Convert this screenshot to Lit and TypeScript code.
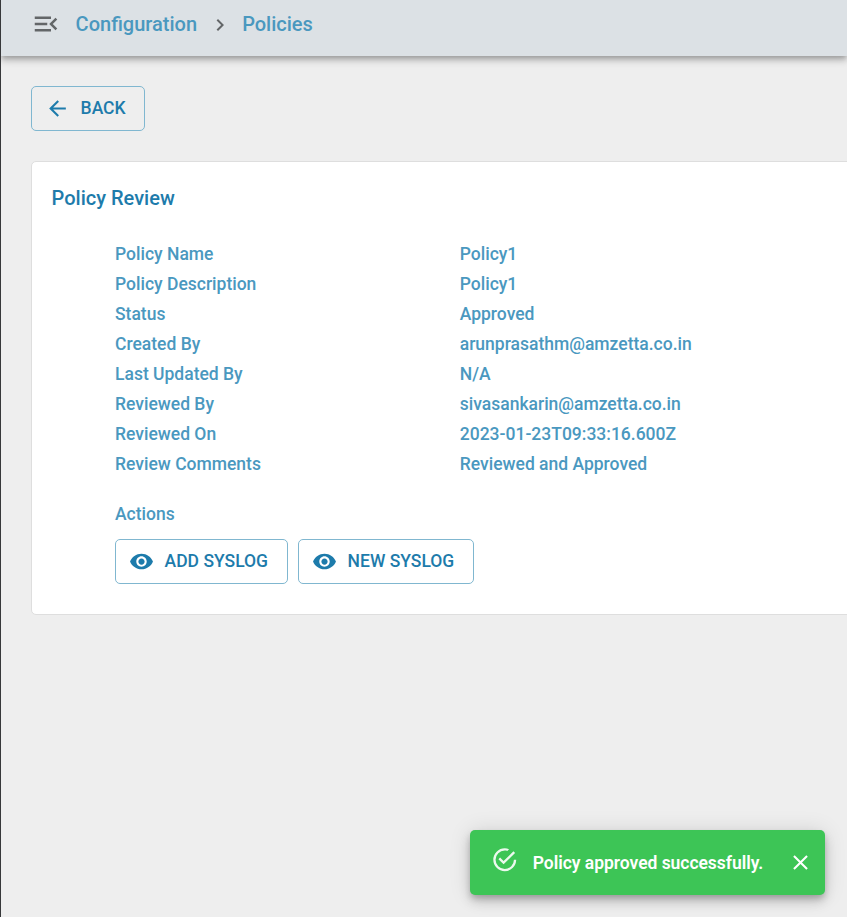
import { LitElement, html, css, svg } from "lit";
import { customElement } from "lit/decorators.js";

const ICONS = {
  menuOpen: "M3 18h13v-2H3v2zM3 6v2h13V6H3zm0 7h10v-2H3v2zm18 2.59L17.42 12 21 8.41 19.59 7l-5 5 5 5L21 15.59z",
  next: "M10 6L8.59 7.41 13.17 12l-4.58 4.59L10 18l6-6z",
  back: "M20 11H7.83l5.59-5.59L12 4l-8 8 8 8 1.41-1.41L7.83 13H20v-2z",
  eye: "M12 4.5C7 4.5 2.73 7.61 1 12c1.73 4.39 6 7.5 11 7.5s9.27-3.11 11-7.5c-1.73-4.39-6-7.5-11-7.5zM12 17c-2.76 0-5-2.24-5-5s2.24-5 5-5 5 2.24 5 5-2.24 5-5 5zm0-8c-1.66 0-3 1.34-3 3s1.34 3 3 3 3-1.34 3-3-1.34-3-3-3z",
  success: "M20,12A8,8 0 0,1 12,20A8,8 0 0,1 4,12A8,8 0 0,1 12,4C12.76,4 13.5,4.11 14.2,4.31L15.77,2.74C14.61,2.26 13.34,2 12,2A10,10 0 0,0 2,12A10,10 0 0,0 12,22A10,10 0 0,0 22,12M7.91,10.08L6.5,11.5L11,16L21,6L19.59,4.58L11,13.17L7.91,10.08Z",
  close: "M19 6.41L17.59 5 12 10.59 6.41 5 5 6.41 10.59 12 5 17.59 6.41 19 12 13.41 17.59 19 19 17.59 13.41 12z",
};

const icon = (name: keyof typeof ICONS) =>
  html`<svg class="icon ${name}" viewBox="0 0 24 24" aria-hidden="true">${svg`<path d=${ICONS[name]}></path>`}</svg>`;

const DETAILS: [string, string][] = [
  ["Policy Name", "Policy1"],
  ["Policy Description", "Policy1"],
  ["Status", "Approved"],
  ["Created By", "arunprasathm@amzetta.co.in"],
  ["Last Updated By", "N/A"],
  ["Reviewed By", "sivasankarin@amzetta.co.in"],
  ["Reviewed On", "2023-01-23T09:33:16.600Z"],
  ["Review Comments", "Reviewed and Approved"],
];

@customElement("app-root")
export class AppRoot extends LitElement {
  static styles = css`
    :host {
      display: block;
      position: relative;
      box-sizing: border-box;
      height: 917px;
      overflow: hidden;
      border-left: 1px solid #37383a;
      background: #eeeeee;
      font-family: Roboto, "Liberation Sans", sans-serif;
      font-weight: 500;
      font-size: 17.5px;
      color: #4a98bf;
    }
    * { box-sizing: border-box; }
    .icon { display: block; flex: none; fill: currentColor; width: 25px; height: 25px; }
    header {
      display: flex;
      align-items: center;
      height: 56px;
      padding: 0 0 8px 30px;
      background: #dce1e5;
      box-shadow: 0 2.5px 5px -1px rgba(0, 0, 0, 0.2), 0 5px 6px 0 rgba(0, 0, 0, 0.14), 0 1px 12px 0 rgba(0, 0, 0, 0.12);
      font-size: 20px;
    }
    .menuOpen { width: 30px; height: 30px; margin-right: 14.6px; color: #636668; }
    .next { width: 24px; height: 24px; margin: 1px 10.5px 0 10.6px; color: #636668; }
    main { padding: 30px 0 0 30px; }
    button {
      display: flex;
      align-items: center;
      height: 45px;
      padding: 0 18px 0 13px;
      border: 1px solid #80b7d0;
      border-radius: 5px;
      background: transparent;
      color: #1d7bab;
      font: inherit;
      line-height: 1;
      white-space: nowrap;
    }
    button .icon { margin-right: 10.6px; }
    .back-button { width: 114px; }
    .card {
      width: 900px;
      height: 454px;
      margin-top: 30px;
      padding: 20px;
      border: 1px solid #dedede;
      border-radius: 5px;
      background: #fff;
    }
    h1 { margin: 0 0 0 -0.4px; font-size: 20px; font-weight: 500; line-height: 32px; color: #1d7bab; }
    dl {
      display: grid;
      grid-template-columns: 344.75px auto;
      grid-auto-rows: 30px;
      margin: 25px 0 0 63px;
      line-height: 30px;
    }
    dd { margin: 0; }
    .actions { margin: 20px 0 0 63px; }
    .actions-title { line-height: 30px; }
    .buttons { display: flex; gap: 10px; margin-top: 10px; }
    .buttons button:first-child { width: 173px; }
    .buttons button:last-child { width: 176px; }
    .toast {
      position: absolute;
      left: 469.3px;
      top: 830px;
      display: flex;
      align-items: center;
      width: 355.2px;
      height: 65px;
      padding: 0 12.6px 0 20.5px;
      border-radius: 5px;
      background: #3dc556;
      color: #fff;
      box-shadow: 0 4px 6px -1px rgba(0, 0, 0, 0.2), 0 7px 12px 0 rgba(0, 0, 0, 0.14), 0 1px 22px 0 rgba(0, 0, 0, 0.12);
    }
    .success { width: 27.5px; height: 27.5px; margin: 0 14.5px 5px 0; opacity: 0.9; }
    .message { flex: 1; white-space: nowrap; font-weight: 600; letter-spacing: -0.04px; }
  `;

  render() {
    return html`
      <header>
        ${icon("menuOpen")}<span class="crumb">Configuration</span>${icon("next")}<span class="crumb">Policies</span>
      </header>
      <main>
        <button class="back-button">${icon("back")}<span>BACK</span></button>
        <section class="card">
          <h1>Policy Review</h1>
          <dl>${DETAILS.map(([label, value]) => html`<dt>${label}</dt><dd>${value}</dd>`)}</dl>
          <div class="actions">
            <div class="actions-title">Actions</div>
            <div class="buttons">
              ${["ADD SYSLOG", "NEW SYSLOG"].map((label) => html`<button>${icon("eye")}<span>${label}</span></button>`)}
            </div>
          </div>
        </section>
      </main>
      <div class="toast" role="alert">
        ${icon("success")}<span class="message">Policy approved successfully.</span>${icon("close")}
      </div>
    `;
  }
}
